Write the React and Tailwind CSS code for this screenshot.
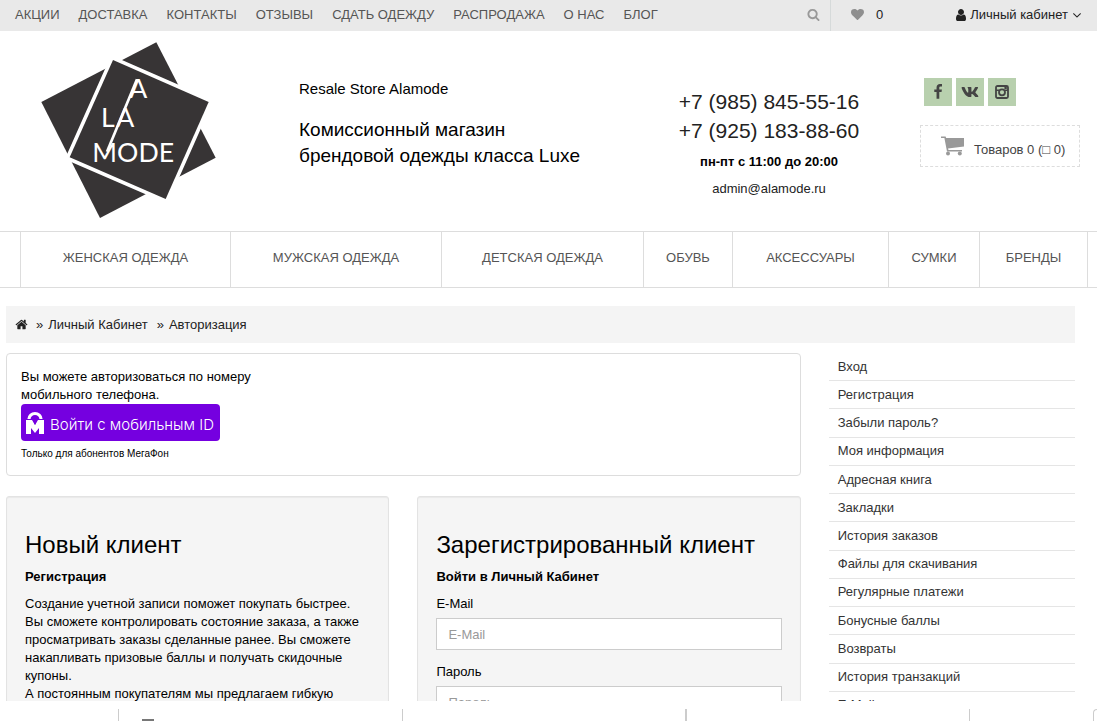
import { FaVk } from 'react-icons/fa';

const topLinks = ['АКЦИИ', 'ДОСТАВКА', 'КОНТАКТЫ', 'ОТЗЫВЫ', 'СДАТЬ ОДЕЖДУ', 'РАСПРОДАЖА', 'О НАС', 'БЛОГ'];

const categories = ['ЖЕНСКАЯ ОДЕЖДА', 'МУЖСКАЯ ОДЕЖДА', 'ДЕТСКАЯ ОДЕЖДА', 'ОБУВЬ', 'АКСЕССУАРЫ', 'СУМКИ', 'БРЕНДЫ'];

const accountLinks = [
  'Вход',
  'Регистрация',
  'Забыли пароль?',
  'Моя информация',
  'Адресная книга',
  'Закладки',
  'История заказов',
  'Файлы для скачивания',
  'Регулярные платежи',
  'Бонусные баллы',
  'Возвраты',
  'История транзакций',
  'E-Mail рассылка',
];

const iconPaths = {
  search:
    'M1216 832q0-185-131.5-316.5t-316.5-131.5-316.5 131.5-131.5 316.5 131.5 316.5 316.5 131.5 316.5-131.5 131.5-316.5zm512 832q0 52-38 90t-90 38q-54 0-90-38l-343-342q-179 124-399 124-143 0-273.5-55.5t-225-150-150-225-55.5-273.5 55.5-273.5 150-225 225-150 273.5-55.5 273.5 55.5 225 150 150 225 55.5 273.5q0 220-124 399l343 343q37 37 37 90z',
  heart:
    'M896 1664q-26 0-44-18l-624-602q-10-8-27.5-26t-55.5-65.5-68-97.5-53.5-121-23.5-138q0-220 127-344t351-124q62 0 126.5 21.5t120 58 95.5 68.5 76 68q36-36 76-68t95.5-68.5 120-58 126.5-21.5q224 0 351 124t127 344q0 221-229 450l-623 600q-18 18-44 18z',
  user: 'M1536 1399q0 109-62.5 187t-150.5 78h-854q-88 0-150.5-78t-62.5-187q0-85 8.5-160.5t31.5-152 58.5-131 94-89 134.5-34.5q131 128 313 128t313-128q76 0 134.5 34.5t94 89 58.5 131 31.5 152 8.5 160.5zm-256-887q0 159-112.5 271.5t-271.5 112.5-271.5-112.5-112.5-271.5 112.5-271.5 271.5-112.5 271.5 112.5 112.5 271.5z',
  home: 'M1472 992v480q0 26-19 45t-45 19h-384v-384h-256v384h-384q-26 0-45-19t-19-45v-480q0-1 .5-3t.5-3l575-474 575 474q1 2 1 6zm223-69l-62 74q-8 9-21 11h-3q-13 0-21-7l-692-577-692 577q-12 8-24 7-13-2-21-11l-62-74q-8-10-7-23.5t11-21.5l719-599q32-26 76-26t76 26l244 204v-195q0-14 9-23t23-9h192q14 0 23 9t9 23v408l219 182q10 8 11 21.5t-7 23.5z',
  angleDown:
    'M1395 736q0 13-10 23l-466 466q-10 10-23 10t-23-10l-466-466q-10-10-10-23t10-23l50-50q10-10 23-10t23 10l393 393 393-393q10-10 23-10t23 10l50 50q10 10 10 23z',
  facebook:
    'M1343 12v264h-157q-86 0-116 36t-30 108v189h293l-39 296h-254v759h-306v-759h-255v-296h255v-218q0-186 104-288.5t277-102.5q147 0 228 12z',
};

function Icon({ name, className }) {
  return (
    <svg viewBox="0 0 1792 1792" className={className} fill="currentColor" aria-hidden="true">
      <path d={iconPaths[name]} />
    </svg>
  );
}

function Logo() {
  return (
    <svg viewBox="34 16 525 528" className="w-[175px] h-[176px]" role="img" aria-label="A La Mode">
      <polygon points="380,17 558,363 211,544 35,196" fill="#373435" />
      <polygon points="250,70 537,196 408,487 120,362" fill="#373435" stroke="#fff" strokeWidth="22" />
      <polygon points="250,70 537,196 408,487 120,362" fill="#373435" />
      <g fill="#fff" fontFamily="Lato, sans-serif" fontSize="80">
        <text x="299" y="185">A</text>
        <text x="214" y="271">L</text>
        <text x="260" y="271">A</text>
        <text x="188" y="375">MODE</text>
      </g>
      <path d="M322 128 L232 345" stroke="#fff" strokeWidth="8" />
    </svg>
  );
}

function TopBar() {
  return (
    <div className="flex h-[31px] shrink-0 items-stretch bg-[#e9e9e9] pr-[13px]">
      <nav className="flex flex-1 items-center gap-[19px] pl-[15px] pb-[2px] text-[#555]">
        {topLinks.map((link) => (
          <a key={link} href="#" className="whitespace-nowrap">{link}</a>
        ))}
      </nav>
      <button type="button" aria-label="Поиск" className="mr-[10px] pb-[2px] text-[#999]">
        <Icon name="search" className="size-[13px]" />
      </button>
      <div className="flex w-[254px] items-center justify-between border-l border-[#d6dada] pl-5 pb-[2px] text-[#222]">
        <a href="#" className="flex items-center gap-3">
          <Icon name="heart" className="size-[13px] text-[#8f8f8f]" />
          0
        </a>
        <button type="button" className="flex items-center gap-[2px]">
          <Icon name="user" className="size-[14px]" />
          Личный кабинет
          <Icon name="angleDown" className="size-[14px]" />
        </button>
      </div>
    </div>
  );
}

function Header() {
  return (
    <header className="grid h-[200px] shrink-0 grid-cols-[299fr_319fr_302fr_177fr]">
      <a href="#" className="pl-[41px] pt-[11px]">
        <Logo />
      </a>
      <div className="pt-[49px] text-black">
        <p className="text-[15px] leading-[18px]">Resale Store Alamode</p>
        <p className="mt-[19px] text-[19px] leading-[26px]">
          Комиссионный магазин
          <br />
          брендовой одежды класса Luxe
        </p>
      </div>
      <div className="pt-[56px] text-center text-[#222]">
        <p className="text-[21px] leading-[29px]">
          +7 (985) 845-55-16
          <br />
          +7 (925) 183-88-60
        </p>
        <p className="mt-2 font-bold text-black">пн-пт с 11:00 до 20:00</p>
        <a href="#" className="mt-[9px] block">admin@alamode.ru</a>
      </div>
      <div className="pr-[17px] pt-[47px]">
        <div className="flex gap-1 pl-1 text-[#444]">
          <a href="#" aria-label="Facebook" className="flex size-7 items-center justify-center bg-[#b8d0ae]">
            <Icon name="facebook" className="size-4" />
          </a>
          <a href="#" aria-label="VK" className="flex size-7 items-center justify-center bg-[#b8d0ae]">
            <FaVk className="size-[18px]" />
          </a>
          <a href="#" aria-label="Instagram" className="flex size-7 items-center justify-center bg-[#b8d0ae]">
            <svg viewBox="0 0 14 14" className="size-[14px]" fill="none" stroke="currentColor">
              <rect x="1" y="1" width="12" height="12" rx="1.5" strokeWidth="1.8" />
              <circle cx="7" cy="7.3" r="3" strokeWidth="1.8" />
              <path d="M1 5.2h3M10 5.2h3" strokeWidth="1.4" />
              <path d="M9.4 2h2.4v2H9.4z" fill="currentColor" stroke="none" />
            </svg>
          </a>
        </div>
        <button type="button" className="mt-[19px] flex h-[42px] w-full items-center gap-[10px] whitespace-nowrap border border-dashed border-[#ddd] pl-5 text-[#444]">
          <svg viewBox="0 0 23 20" className="h-5 w-[23px]" fill="#999" aria-hidden="true">
            <path d="M0 .5h4.600l.6 1.500H23v8.600L7 12.400l.5 1.600H21v1.500H6L3.400 2H0z" />
            <circle cx="7" cy="17.500" r="2" />
            <circle cx="18.800" cy="17.500" r="2" />
          </svg>
          <span className="pt-2">Товаров 0 (□ 0)</span>
        </button>
      </div>
    </header>
  );
}

function CategoryNav() {
  return (
    <nav className="shrink-0 border-y border-[#ddd] pl-5 pr-[9px]">
      <div className="grid h-[55px] grid-cols-[210fr_211fr_202fr_89fr_156fr_91fr_108fr] border-l border-[#ddd]">
        {categories.map((name) => (
          <a key={name} href="#" className="flex items-center justify-center whitespace-nowrap border-r border-[#ddd] pb-1 text-[#555]">
            {name}
          </a>
        ))}
      </div>
    </nav>
  );
}

function MobileIdPanel() {
  return (
    <section className="h-[123px] rounded-[4px] border border-[#ddd] px-[14px] pt-[14px] text-black">
      <p className="max-w-[250px]">Вы можете авторизоваться по номеру мобильного телефона.</p>
      <button type="button" className="flex h-[37px] w-[199px] items-center gap-[5px] whitespace-nowrap rounded-[4px] bg-[#7500e0] px-1 pt-1 font-['Inter',sans-serif] text-[15px] font-light text-white">
        <svg viewBox="0 0 20 24" className="mb-1 h-6 w-5 shrink-0" aria-hidden="true">
          <path d="M4 8a6 5.500 0 0 1 12 0" fill="none" stroke="#fff" strokeWidth="3.200" />
          <path d="M1 9h6l3 5 3-5h6v14h-5v-6l-4 5-4-5v6H1z" fill="#fff" />
          <path d="M8 9.500a2 2 0 1 1 4 0L10 14z" fill="#7500e0" />
        </svg>
        Войти с мобильным ID
      </button>
      <p className="mt-1 text-[10px]">Только для абонентов МегаФон</p>
    </section>
  );
}

function Well({ title, subtitle, children }) {
  return (
    <section className="rounded-[3px] border border-[#e3e3e3] bg-[#f5f5f5] px-[18px] pb-5 pt-[35px] text-black shadow-[inset_0_1px_1px_rgba(0,0,0,0.05)]">
      <h2 className="text-[24px] leading-[26px]">{title}</h2>
      <p className="mb-[9px] mt-[10px] font-bold">{subtitle}</p>
      {children}
    </section>
  );
}

function Field({ id, label, type }) {
  return (
    <div className="mb-[13px]">
      <label htmlFor={id} className="mb-[5px] block">{label}</label>
      <input
        id={id}
        type={type}
        placeholder={label}
        className="block h-8 w-full border border-[#ccc] bg-white px-[11px] outline-none placeholder:text-[#999]"
      />
    </div>
  );
}

function Account() {
  return (
    <div className="grid grid-cols-12 items-start gap-7">
      <div className="col-span-9 grid gap-5">
        <MobileIdPanel />
        <div className="grid grid-cols-2 gap-7">
          <Well title="Новый клиент" subtitle="Регистрация">
            <p>
              Создание учетной записи поможет покупать быстрее. Вы сможете контролировать состояние заказа, а также
              просматривать заказы сделанные ранее. Вы сможете накапливать призовые баллы и получать скидочные купоны.
            </p>
            <p>А постоянным покупателям мы предлагаем гибкую систему скидок.</p>
          </Well>
          <Well title="Зарегистрированный клиент" subtitle="Войти в Личный Кабинет">
            <Field id="email" label="E-Mail" type="email" />
            <Field id="password" label="Пароль" type="password" />
          </Well>
        </div>
      </div>
      <ul className="col-span-3 grid h-[367px] auto-rows-fr">
        {accountLinks.map((link) => (
          <li key={link} className="flex items-center border-b border-[#e5e5e5] pl-[9px]">
            <a href="#" className="text-[#333]">{link}</a>
          </li>
        ))}
      </ul>
    </div>
  );
}

function BottomStrip() {
  return (
    <footer className="grid h-5 shrink-0 grid-cols-[118fr_284fr_283fr_284fr_128fr] bg-white pt-2">
      <div />
      <div className="flex items-end border-l border-[#ccc] pl-[23px]">
        <span className="h-[2px] w-3 bg-[#777]" />
      </div>
      <div className="border-l border-[#ccc]" />
      <div className="border-l-2 border-[#ccc]" />
      <div className="flex justify-end border-l border-[#ccc]">
        <span className="w-1 rounded-tl-[4px] border-l border-t border-[#ccc]" />
      </div>
    </footer>
  );
}

export default function App() {
  return (
    <div className="flex h-screen flex-col overflow-hidden bg-white font-['Liberation_Sans',Arial,sans-serif] text-[13px] leading-[18px]">
      <div className="flex min-h-0 flex-1 flex-col overflow-hidden">
        <TopBar />
        <Header />
        <CategoryNav />
        <main className="min-h-0 flex-1 overflow-hidden pl-[6px] pr-[22px] pt-[18px]">
          <nav className="mb-[10px] flex h-[37px] items-center bg-[#f4f4f4] pl-[9px] text-[#222]">
            <a href="#" aria-label="Главная" className="mr-[8px]">
              <Icon name="home" className="size-[13px]" />
            </a>
            <span className="mr-[5px]">»</span>
            <a href="#" className="mr-[9px]">Личный Кабинет</a>
            <span className="mr-[5px]">»</span>
            <a href="#">Авторизация</a>
          </nav>
          <Account />
        </main>
      </div>
      <BottomStrip />
    </div>
  );
}
